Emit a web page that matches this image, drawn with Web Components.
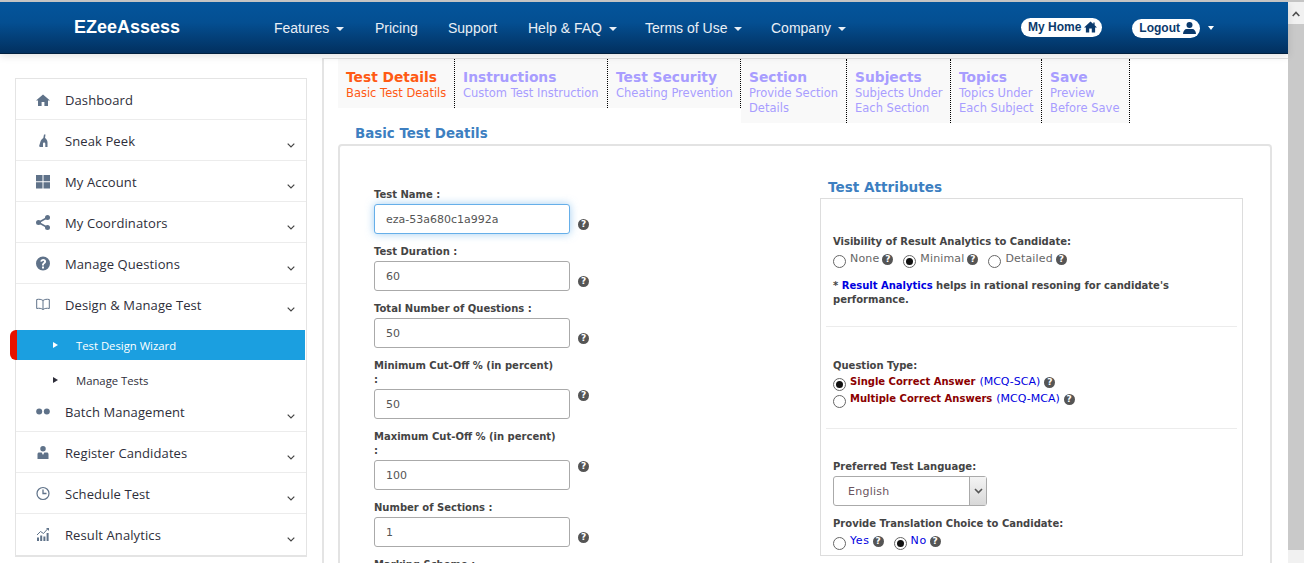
<!DOCTYPE html>
<html lang="en">
<head>
<meta charset="utf-8">
<title>EZeeAssess</title>
<style>
  html, body { margin: 0; height: 563px; overflow: hidden; background: #fff; }
</style>
</head>
<body>
<ez-app>
  <ez-header slot="header"></ez-header>
  <ez-sidebar slot="sidebar">
    <ez-menu-item icon="home">Dashboard</ez-menu-item>
    <ez-menu-item icon="peek" more>Sneak Peek</ez-menu-item>
    <ez-menu-item icon="grid" more>My Account</ez-menu-item>
    <ez-menu-item icon="share" more>My Coordinators</ez-menu-item>
    <ez-menu-item icon="question" more>Manage Questions</ez-menu-item>
    <ez-menu-item icon="book" more open>Design &amp; Manage Test</ez-menu-item>
    <ez-sub-item active>Test Design Wizard</ez-sub-item>
    <ez-sub-item>Manage Tests</ez-sub-item>
    <ez-menu-item icon="batch" more>Batch Management</ez-menu-item>
    <ez-menu-item icon="user" more>Register Candidates</ez-menu-item>
    <ez-menu-item icon="clock" more>Schedule Test</ez-menu-item>
    <ez-menu-item icon="chart" more last>Result Analytics</ez-menu-item>
  </ez-sidebar>
  <ez-wizard slot="content">
    <ez-tab slot="tabs" active title-text="Test Details">Basic Test Deatils</ez-tab>
    <ez-tab slot="tabs" title-text="Instructions">Custom Test Instruction</ez-tab>
    <ez-tab slot="tabs" title-text="Test Security">Cheating Prevention</ez-tab>
    <ez-tab slot="tabs" title-text="Section">Provide Section<br>Details</ez-tab>
    <ez-tab slot="tabs" title-text="Subjects">Subjects Under<br>Each Section</ez-tab>
    <ez-tab slot="tabs" title-text="Topics">Topics Under<br>Each Subject</ez-tab>
    <ez-tab slot="tabs" title-text="Save">Preview<br>Before Save</ez-tab>

    <ez-field slot="left" label="Test Name :" value="eza-53a680c1a992a" focused></ez-field>
    <ez-field slot="left" label="Test Duration :" value="60"></ez-field>
    <ez-field slot="left" label="Total Number of Questions :" value="50"></ez-field>
    <ez-field slot="left" label="Minimum Cut-Off % (in percent) :" value="50"></ez-field>
    <ez-field slot="left" label="Maximum Cut-Off % (in percent) :" value="100"></ez-field>
    <ez-field slot="left" label="Number of Sections :" value="1"></ez-field>
    <ez-field slot="left" label="Marking Scheme :" value=""></ez-field>

    <ez-attributes slot="right"></ez-attributes>
  </ez-wizard>
  <ez-scrollbar slot="scrollbar"></ez-scrollbar>
</ez-app>

<script>
const ICONS = {
  home: '<path d="M7 2.500 0 8.500h2v5.500h3.600V10h2.800v4H12V8.500h2z"/>',
  peek: '<path d="M8 1.500h1.500L9 5c1.500 1 2.500 2.500 2.500 4.500v4.500H9.300v-3c0-1-.5-1.500-1.200-1.500S7 10 7 11v3H4.500C3.700 14 3.200 13.500 3.200 12.700L4.500 8.500C5 7 6 5.700 7.300 5z"/>',
  grid: '<path d="M0 1h6.500v6.200H0zM7.500 1H14v6.200H7.500zM0 8.200h6.500V14.500H0zM7.500 8.200H14V14.500H7.500z"/>',
  share: '<circle cx="2.500" cy="7.500" r="2.500"/><circle cx="11.500" cy="2.500" r="2.500"/><circle cx="11.500" cy="12.500" r="2.500"/><path d="M2.500 7.500 11.500 2.500M2.500 7.500 11.500 12.500" stroke="currentColor" stroke-width="1.500" fill="none"/>',
  question: '<path fill-rule="evenodd" d="M7 .5a7 7 0 1 0 0 14 7 7 0 0 0 0-14zM6 10.500h2V12.500H6zM4.300 5.500C4.500 3.900 5.600 3 7.200 3c1.700 0 2.900 1 2.900 2.500 0 1.100-.6 1.700-1.300 2.200-.6.400-.9.700-.9 1.500v.3H6v-.5c0-1.200.5-1.800 1.200-2.300.5-.4.900-.6.900-1.100 0-.5-.4-.8-.9-.8-.6 0-1 .4-1.100 1z"/>',
  book: '<path d="M7 3.500C5.500 2.300 3 2 .7 2.500v9C3 11 5.500 11.300 7 12.500c1.500-1.200 4-1.500 6.300-1V2.500C11 2 8.500 2.300 7 3.500zM7 3.500v9" fill="none" stroke="currentColor" stroke-width="1"/>',
  batch: '<circle cx="3.200" cy="7.500" r="3"/><circle cx="10.800" cy="7.500" r="3"/>',
  user: '<path d="M7 1a2.500 2.500 0 1 1 0 5.500A2.500 2.500 0 0 1 7 1zM1.500 14V9.200c0-1 .7-1.700 1.700-1.700H5.700L7 10l1.300-2.500h2.500c1 0 1.700.7 1.700 1.700V14z"/>',
  clock: '<circle cx="7" cy="7.500" r="6" fill="none" stroke="currentColor" stroke-width="1.200"/><path d="M7 3.500v4h3.500" fill="none" stroke="currentColor" stroke-width="1.300"/>',
  chart: '<path d="M1 10.500h2V14H1zM4.200 8.500h2V14h-2zM7.400 9.500h2V14h-2zM10.600 6h2V14h-2z"/><path d="M1 8 4.500 4.500 7.500 6.500 11.500 2" fill="none" stroke="currentColor" stroke-width="1"/><path d="M10 1h3v3z"/>'
};

function define(name, html, setup) {
  const template = document.createElement('template');
  template.innerHTML = html;
  customElements.define(name, class extends HTMLElement {
    constructor() {
      super();
      this.attachShadow({ mode: 'open' }).appendChild(template.content.cloneNode(true));
    }
    connectedCallback() {
      if (setup) setup(this, this.shadowRoot);
    }
  });
}

define('ez-app', `
  <style>
    :host { display: flex; height: 563px; box-sizing: border-box; border-top: 2px solid #c4c4c4; overflow: hidden; }
    .main { flex: 1; min-width: 0; display: flex; flex-direction: column; }
    .body { flex: 1; display: flex; min-height: 0; padding-top: 4px; }
  </style>
  <div class="main">
    <slot name="header"></slot>
    <div class="body">
      <slot name="sidebar"></slot>
      <slot name="content"></slot>
    </div>
  </div>
  <slot name="scrollbar"></slot>
`);

define('ez-scrollbar', `
  <style>
    :host { display: flex; flex-direction: column; width: 16px; height: 561px; background: #f1f1f1; }
    .up { height: 21px; margin-top: 1px; display: flex; align-items: center; justify-content: center; }
    .thumb { height: 526px; background: #c9c9c9; }
  </style>
  <div class="up"><svg width="8" height="6" viewBox="0 0 8 6"><path d="M.7 5 4 1.500 7.300 5" fill="none" stroke="#505050" stroke-width="1.600"/></svg></div>
  <div class="thumb"></div>
`);

define('ez-header', `
  <style>
    :host { display: flex; align-items: center; height: 52px; box-sizing: border-box; position: relative; z-index: 2;
      padding: 0 0 0 74px; color: #fff; font: 14px "Liberation Sans", Arial, sans-serif;
      background: linear-gradient(#04559c 0, #044f92 40%, #02305f 100%); border-bottom: 1px solid #01203f;
      box-shadow: 0 2px 8px rgba(0,0,0,.12); }
    .brand { width: 200px; font-weight: bold; font-size: 18px; }
    nav { display: grid; grid-template-columns: 101px 73px 80px 117px 126px auto; color: #e9eff6; }
    nav span { display: flex; align-items: center; }
    .caret { width: 0; height: 0; margin-left: 7px; margin-top: 2px; border: 4px solid transparent; border-top-color: #e9eff6; border-bottom: 0; }
    .right { margin-left: auto; display: flex; align-items: center; }
    .pill { display: flex; align-items: center; height: 19px; border-radius: 10px; background: #fff;
      color: #0b3a6c; font-weight: bold; font-size: 12px; }
    .home { gap: 3px; padding: 0 5px 0 7px; margin: -1px 30px 0 0; }
    .logout { gap: 2px; padding: 0 3px 0 7px; margin: 1px 0 0 0; }
    .right .caret { margin: 1px 74px 0 8px; border-top-color: #fff; border-width: 4px 3.500px 0; }
    svg { fill: #0b3a6c; display: block; }
  </style>
  <div class="brand">EZeeAssess</div>
  <nav>
    <span>Features<i class="caret"></i></span>
    <span>Pricing</span>
    <span>Support</span>
    <span>Help &amp; FAQ<i class="caret"></i></span>
    <span>Terms of Use<i class="caret"></i></span>
    <span>Company<i class="caret"></i></span>
  </nav>
  <div class="right">
    <div class="pill home">My Home<svg width="13" height="12" viewBox="0 0 14 13"><path d="M7 .5 0 7h2v5.500h3.600V8.200h2.800v4.300H12V7h2L11.500 4.700V1.500H10v1.800z"/></svg></div>
    <div class="pill logout">Logout<svg width="15" height="12" viewBox="0 0 15 12"><circle cx="7.500" cy="3" r="3"/><path d="M1 12c0-3 2-5 3.500-5h6c1.500 0 3.500 2 3.500 5z"/></svg></div>
    <i class="caret"></i>
  </div>
`);

define('ez-sidebar', `
  <style>
    :host { display: block; flex: none; width: 322px; box-sizing: border-box; padding: 20px 15px 0; }
    .box { width: 292px; box-sizing: border-box; border: 1px solid #e4e4e4; border-bottom-width: 2px; }
  </style>
  <div class="box"><slot></slot></div>
`);

define('ez-menu-item', `
  <style>
    :host { display: flex; align-items: center; height: 41px; box-sizing: border-box; padding: 1px 0 0 20px;
      border-bottom: 1px solid #ececec; font: 13px "Open Sans", sans-serif; letter-spacing: .1px; color: #2e2e3a; }
    :host([open]), :host([last]) { border-bottom: 0; padding-top: 0; }
    svg.icon { width: 14px; height: 15px; margin-right: 15px; fill: #5f7289; color: #5f7289; flex: none; }
    svg.more { margin: 10px 11px 0 auto; display: none; }
    :host([more]) svg.more { display: block; }
  </style>
  <svg class="icon" viewBox="0 0 14 15"></svg>
  <slot></slot>
  <svg class="more" width="8" height="5" viewBox="0 0 8 5"><path d="M.7.700 4 4 7.300.700" fill="none" stroke="#444" stroke-width="1.200"/></svg>
`, (el, root) => {
  root.querySelector('.icon').innerHTML = ICONS[el.getAttribute('icon')] || '';
});

define('ez-sub-item', `
  <style>
    :host { display: flex; align-items: center; box-sizing: border-box; height: 20px; margin: 10px 0 1px; padding-left: 37px;
      font: 11.300px "Open Sans", sans-serif; color: #2e2e3a; }
    :host([active]) { height: 30px; margin: 5px 1px 0 -6px; padding-left: 36px; background: #1b9fe0; color: #fff;
      border-left: 7px solid #e81300; border-radius: 6px 0 0 6px; }
    i { width: 0; height: 0; margin-right: 18px; border: 3px solid transparent; border-left: 5px solid currentColor; border-right: 0; }
  </style>
  <i></i><slot></slot>
`);

define('ez-wizard', `
  <style>
    :host { display: block; flex: 1; min-width: 0; box-sizing: border-box; border-left: 2px solid #e4e4e4; border-top: 1px solid #e0e0e0; padding-left: 14px; height: 510px; overflow: hidden; }
    .tabs { display: grid; grid-template-columns: 117px 153px 133px 106px 104px 91px 88px; align-items: start; }
    h2 { margin: 2px 0 1px 17px; font: bold 13.400px/18px "DejaVu Sans", Verdana, sans-serif; color: #3d7fc1; }
    .panel { display: flex; margin-right: 16px; height: 600px; box-sizing: border-box; border: 2px solid #e3e3e3; border-radius: 4px 4px 0 0; }
    .left { width: 480px; flex: none; box-sizing: border-box; padding: 41px 0 0 34px; }
    .right { padding-top: 32px; }
  </style>
  <div class="tabs"><slot name="tabs"></slot></div>
  <h2>Basic Test Deatils</h2>
  <div class="panel">
    <div class="left"><slot name="left"></slot></div>
    <div class="right"><slot name="right"></slot></div>
  </div>
`);

define('ez-tab', `
  <style>
    :host { display: block; box-sizing: border-box; padding: 9px 0 7px 8px; background: #f9f9f9; border-right: 1px dotted #000;
      font: 11.500px/15px "DejaVu Sans", Verdana, sans-serif; color: #a89dff; white-space: nowrap; }
    :host([active]) { color: #ff5a14; }
    .title { font-weight: bold; font-size: 13.800px; line-height: 18px; }
  </style>
  <div class="title"></div>
  <slot></slot>
`, (el, root) => {
  root.querySelector('.title').textContent = el.getAttribute('title-text');
});

define('ez-help', `
  <style>
    :host { display: inline-flex; align-items: center; justify-content: center; width: 11px; height: 11px; border-radius: 50%;
      background: #555; color: #fff; font: bold 9px/11px "DejaVu Sans", Verdana, sans-serif; letter-spacing: 0; vertical-align: middle; flex: none; }
  </style>
  ?
`);

define('ez-field', `
  <style>
    :host { display: grid; grid-template-columns: 196px auto; column-gap: 8px; justify-content: start; margin-bottom: 10px;
      font: 11px/14px "DejaVu Sans", Verdana, sans-serif; }
    label { font-weight: bold; font-size: 10px; color: #444; padding-top: 1px; margin-bottom: 2px; grid-column: 1; width: 184px; }
    .input { grid-column: 1; height: 30px; box-sizing: border-box; padding: 1px 11px 0; border: 1px solid #aaa; border-radius: 3px;
      display: flex; align-items: center; color: #555; background: #fff; }
    :host([focused]) .input { border-color: #66afe9; box-shadow: 0 0 8px rgba(102,175,233,.6); }
    ez-help { grid-column: 2; grid-row: 1 / span 2; align-self: start; margin-top: 32px; }
  </style>
  <label></label>
  <div class="input"></div>
  <ez-help></ez-help>
`, (el, root) => {
  root.querySelector('label').textContent = el.getAttribute('label');
  root.querySelector('.input').textContent = el.getAttribute('value');
});

define('ez-radio', `
  <style>
    :host { display: inline-flex; align-items: flex-start; gap: 4px; margin-right: 10px; color: #666; }
    .dot { width: 13px; height: 13px; box-sizing: border-box; margin-top: 3px; border: 1px solid #666; border-radius: 50%; background: #fff; flex: none; display: flex; align-items: center; justify-content: center; }
    :host([checked]) .dot::after { content: ""; width: 7px; height: 7px; border-radius: 50%; background: #111; }
    .text { display: inline-flex; gap: 3px; align-items: center; height: 14px; }
  </style>
  <span class="dot"></span>
  <span class="text"><slot></slot><ez-help></ez-help></span>
`);

define('ez-attributes', `
  <style>
    :host { display: block; width: 423px; font: 11px/14px "DejaVu Sans", Verdana, sans-serif; color: #444; }
    h3 { margin: 0 0 2px 8px; font: bold 13.600px/18px "DejaVu Sans", Verdana, sans-serif; color: #3d7fc1; }
    .box { box-sizing: border-box; height: 358px; border: 1px solid #ddd; padding: 0 5px; }
    section { padding-left: 7px; border-bottom: 1px solid #ececec; }
    section:last-child { border-bottom: 0; }
    .s1 { height: 128px; padding-top: 36px; box-sizing: border-box; }
    .s2 { height: 102px; padding-top: 32px; box-sizing: border-box; }
    .s3 { padding-top: 31px; }
    b.label { display: block; font-size: 10px; }
    .row { display: flex; margin-top: 3px; height: 17px; }
    .s2 b.label + .row { margin-top: 2px; }
    .vis { letter-spacing: .15px; }
    .tight { margin-top: 0; }
    .last { margin-top: 3px; }
    .note { margin: 10px 0 0; font-weight: bold; font-size: 10px; white-space: nowrap; }
    .blue { color: #0000e0; }
    .link { color: #0000e0; font-weight: normal; }
    .mcq { margin: 0 1px; }
    .yn { letter-spacing: .6px; }
    .red { color: #8b0000; font-weight: bold; font-size: 10px; }
    .select { display: flex; width: 154px; height: 30px; box-sizing: border-box; margin: 2px 0 11px; border: 1px solid #aaa; border-radius: 3px; color: #6b5560; }
    .select span { flex: 1; padding-left: 14px; line-height: 29px; letter-spacing: .25px; }
    .select i { width: 16px; display: flex; align-items: center; justify-content: center; background: linear-gradient(#f4f4f4, #d8d8d8); border-left: 1px solid #aaa; }
  </style>
  <h3>Test Attributes</h3>
  <div class="box">
    <section class="s1">
      <b class="label">Visibility of Result Analytics to Candidate:</b>
      <div class="row vis">
        <ez-radio>None</ez-radio>
        <ez-radio checked>Minimal</ez-radio>
        <ez-radio>Detailed</ez-radio>
      </div>
      <p class="note">* <span class="blue">Result Analytics</span> helps in rational resoning for candidate's<br>performance.</p>
    </section>
    <section class="s2">
      <b class="label">Question Type:</b>
      <div class="row"><ez-radio checked><span class="red">Single Correct Answer</span> <span class="link mcq">(MCQ-SCA)</span></ez-radio></div>
      <div class="row tight"><ez-radio><span class="red">Multiple Correct Answers</span> <span class="link mcq">(MCQ-MCA)</span></ez-radio></div>
    </section>
    <section class="s3">
      <b class="label">Preferred Test Language:</b>
      <div class="select"><span>English</span><i><svg width="9" height="6" viewBox="0 0 9 6"><path d="M1 1 4.500 4.500 8 1" fill="none" stroke="#555" stroke-width="1.600"/></svg></i></div>
      <b class="label">Provide Translation Choice to Candidate:</b>
      <div class="row last">
        <ez-radio><span class="link yn">Yes</span></ez-radio>
        <ez-radio checked><span class="link yn">No</span></ez-radio>
      </div>
    </section>
  </div>
`);
</script>
</body>
</html>
